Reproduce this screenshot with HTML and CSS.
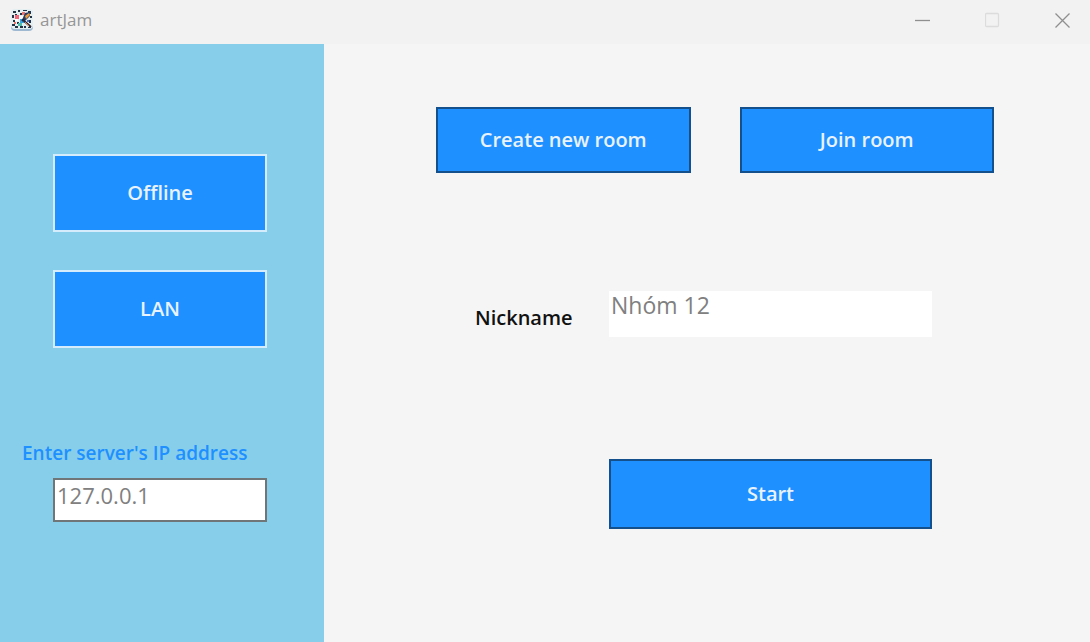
FILE: index.html
```html
<!DOCTYPE html>
<html lang="en">
<head>
<meta charset="utf-8">
<title>artJam</title>
<link rel="stylesheet" href="styles.css">
</head>
<body>
<div class="window">
  <header class="titlebar">
    <svg class="app-icon" viewBox="0 0 24 24" aria-hidden="true">
      <rect x="1" y="2" width="22" height="21" rx="4" fill="#9fb9d3"/>
      <rect x="1" y="1" width="22" height="20" rx="4" fill="#e4eff2"/>
      <path d="M3 3h3v2H3zM8 2h2v2H8zM13 2h4v1h-4zM18 3h3v3h-2V5h-1zM2 7h2v3H2zM5 6h2v2H5zM3 12h2v2H3zM2 16h3v2H2zM5 18h3v2H5zM10 18h3v2h-3zM20 8h2v2h-2zM19 12h2v3h-2zM14 18h2v2h-2zM7 14h2v2H7zM10 5h2v2h-2zM18 19h3v1h-3z" fill="#253347"/>
      <path d="M5 7h4v4H5z" fill="#f0667b"/>
      <path d="M12 4h3v3h-3zM4 14h2v2H4z" fill="#ee766c"/>
      <path d="M9 8h4v3H9zM5 11h3v2H5z" fill="#fff"/>
      <path d="M10 11h5v4h-5z" fill="#35a4e5"/>
      <path d="M8 15h4v3H8z" fill="#52bcaa"/>
      <path d="M15 5l5-1v4l-5 5-3-1z" fill="#263e68"/>
      <path d="M15 8l4-3 1 2-4 4z" fill="#ef9a36"/>
      <path d="M13 12l8 7M12 13l2-2" stroke="#252535" stroke-width="2" fill="none"/>
      <path d="M15 14l4 4" stroke="#ee7b3c" stroke-width="1"/>
      <path d="M17 12h2v2h-2z" fill="#4a70d0"/>
    </svg>
    <h1 class="app-name">artJam</h1>
    <div class="window-controls">
      <button class="window-button" type="button" aria-label="Minimize">
        <svg viewBox="0 0 16 16"><path d="M0 8.500h15"/></svg>
      </button>
      <button class="window-button window-button-disabled" type="button" aria-label="Maximize" disabled>
        <svg viewBox="0 0 16 16"><rect x="0.500" y="1.500" width="13" height="13" rx="1"/></svg>
      </button>
      <button class="window-button" type="button" aria-label="Close">
        <svg viewBox="0 0 16 16"><path d="M0.500 1.500l14 14M14.500 1.500l-14 14"/></svg>
      </button>
    </div>
  </header>
  <div class="content">
    <aside class="sidebar">
      <nav class="modes">
        <button class="button button-light" type="button">Offline</button>
        <button class="button button-light" type="button">LAN</button>
      </nav>
      <div class="server">
        <label class="server-label" for="server">Enter server's IP address</label>
        <input class="server-input" id="server" type="text" value="127.0.0.1">
      </div>
    </aside>
    <main class="main">
      <div class="room-actions">
        <button class="button" type="button">Create new room</button>
        <button class="button" type="button">Join room</button>
      </div>
      <form class="join-form">
        <label class="nickname-label" for="nickname">Nickname</label>
        <input class="nickname-input" id="nickname" type="text" value="Nhóm 12">
        <button class="button start-button" type="button">Start</button>
      </form>
    </main>
  </div>
</div>
</body>
</html>
```
FILE: styles.css
```css
* {
  box-sizing: border-box;
}

body {
  margin: 0;
  font-family: "Open Sans", "Noto Sans", sans-serif;
  font-size: 20px;
  line-height: 28px;
  background: #f5f5f5;
}

button,
input {
  font: inherit;
  border-radius: 0;
}

.window {
  display: flex;
  flex-direction: column;
  min-height: 100vh;
}

.titlebar {
  display: flex;
  align-items: center;
  height: 44px;
  padding: 0 0 4px 10px;
  background: #f2f2f2;
}

.app-icon {
  width: 24px;
  height: 24px;
}

.app-name {
  margin: 0 0 0 6px;
  font-size: 17px;
  font-weight: 400;
  line-height: 24px;
  color: #969696;
}

.window-controls {
  display: flex;
  gap: 16px;
  margin-left: auto;
}

.window-button {
  display: flex;
  align-items: center;
  justify-content: center;
  width: 54px;
  height: 40px;
  padding: 0;
  border: 0;
  background: none;
}

.window-button svg {
  width: 16px;
  height: 16px;
  fill: none;
  stroke: #8f8f8f;
  stroke-width: 1.3;
}

.window-button-disabled svg {
  stroke: #dcdcdc;
}

.content {
  display: flex;
  flex: 1;
}

.sidebar {
  flex: 0 0 324px;
  padding-top: 110px;
  background: #87ceeb;
}

.modes {
  display: grid;
  gap: 38px;
  padding: 0 57px 0 53px;
}

.button {
  padding: 17px 8px;
  border: 2px solid #14518c;
  background: #1e90ff;
  color: #e9f3ff;
  font-weight: 600;
}

.button-light {
  padding: 23px 8px;
  border-color: #d5ecfd;
}

.server {
  display: grid;
  gap: 11px;
  padding: 91px 57px 0 53px;
}

.server-label {
  margin-left: -31px;
  font-size: 19px;
  font-weight: 600;
  color: #1e90ff;
}

.server-input {
  width: 100%;
  padding: 1px 2px 11px;
  border: 2px solid #707678;
  background: #fff;
  color: #808080;
  font-size: 22px;
  line-height: 28px;
}

.main {
  flex: 1;
  padding: 63px 96px 40px 112px;
}

.room-actions {
  display: grid;
  grid-template-columns: 1fr 1fr;
  gap: 49px;
}

.join-form {
  display: grid;
  grid-template-columns: 134px 1fr;
  align-items: center;
  row-gap: 122px;
  padding: 118px 62px 0 39px;
}

.nickname-label {
  padding-top: 8px;
  font-weight: 600;
  color: #111;
}

.nickname-input {
  width: 100%;
  padding: 0 2px 18px;
  border: 0;
  background: #fff;
  color: #808080;
  font-size: 23px;
  line-height: 28px;
}

.start-button {
  grid-column: 2;
  padding: 19px 8px;
}
```
